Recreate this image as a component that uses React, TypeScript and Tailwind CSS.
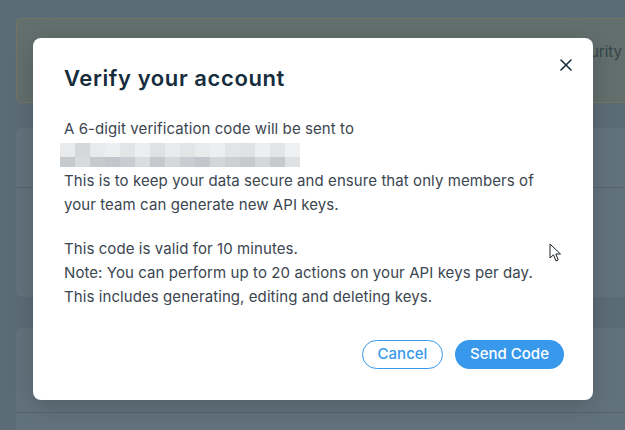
import React from 'react';

const topRow = [
  'bg-[#e9eaec]', 'bg-[#d5d8db]', 'bg-[#e9eaec]', 'bg-[#eceef0]', 'bg-[#e2e4e6]', 'bg-[#eceef0]', 'bg-[#dfe2e4]', 'bg-[#e9eaec]',
  'bg-[#e2e4e6]', 'bg-[#e9eaec]', 'bg-[#eceef0]', 'bg-[#e2e4e6]', 'bg-[#dfe2e4]', 'bg-[#eceef0]', 'bg-[#e2e4e6]', 'bg-[#eef0f1]',
];
const bottomRow = [
  'bg-[#c7cacd]', 'bg-[#d8dbde]', 'bg-[#c7cacd]', 'bg-[#c3c6ca]', 'bg-[#c9ccd0]', 'bg-[#dadcdf]', 'bg-[#c5c8cc]', 'bg-[#d5d7da]',
  'bg-[#c9ccd0]', 'bg-[#c3c6ca]', 'bg-[#d3d6d9]', 'bg-[#cdd0d3]', 'bg-[#c7cacd]', 'bg-[#d5d7da]', 'bg-[#c7cacd]', 'bg-[#dee0e2]',
];

function Redacted() {
  return (
    <div className="my-[2px] -ml-[4px] flex flex-col">
      <div className="flex h-[14px]">
        {topRow.map((c, i) => (
          <span key={i} className={`w-[15px] ${c}`} />
        ))}
      </div>
      <div className="flex h-[10px]">
        {bottomRow.map((c, i) => (
          <span key={i} className={`w-[15px] ${c}`} />
        ))}
      </div>
    </div>
  );
}

function Cursor() {
  return (
    <svg className="absolute left-[549px] top-[243px]" width="13" height="20" viewBox="0 0 13 20">
      <path
        d="M1 1 L1 15 L4.5 11.8 L7 18 L9.2 17 L6.8 11 L11.5 11 Z"
        fill="#ffffff"
        stroke="#1b2329"
        strokeWidth="1"
        strokeLinejoin="round"
      />
    </svg>
  );
}

export default function App() {
  return (
    <div
      className="relative h-[430px] w-[625px] overflow-hidden bg-[#5c6c77]"
      style={{ fontFamily: 'Inter, "Noto Sans", sans-serif' }}
    >
      {/* dimmed page behind the dialog */}
      <div className="flex flex-col pl-4 pt-[18px]">
        <div className="flex h-[85px] w-[640px] items-start justify-end rounded-md border border-[#737560] bg-[#626f6c] pr-[33px] pt-[22px] text-[15px] text-[#36454c]">
          Manage API keys with extra security
        </div>
        <div className="mt-[25px] flex h-[169px] w-[640px] flex-col rounded-md bg-[#62727c]">
          <div className="h-[60px] border-b border-[#56656f]" />
        </div>
        <div className="mt-[31px] flex h-[120px] w-[640px] flex-col rounded-md bg-[#62727c]">
          <div className="h-[85px] border-b border-[#56656f]" />
        </div>
      </div>

      {/* dialog */}
      <div className="absolute left-[33px] top-[38px] flex h-[362px] w-[560px] flex-col rounded-lg bg-white pl-[31px] pr-[29px] pt-[26px] shadow-[0_6px_24px_rgba(0,0,0,0.18)]">
        <button className="absolute right-[21px] top-[21px] flex h-[12px] w-[12px] items-center justify-center">
          <svg width="12" height="12" viewBox="0 0 12 12">
            <path d="M1 1 L11 11 M11 1 L1 11" stroke="#162d3d" strokeWidth="1.6" strokeLinecap="round" />
          </svg>
        </button>

        <h2 className="text-[22px] font-semibold leading-[28px] tracking-[0.6px] text-[#162d3d]">Verify your account</h2>

        <div className="mt-[25px] flex flex-col gap-5 text-[15px] leading-[24px] tracking-[0.08px] text-[#3b4650]">
          <div className="flex flex-col">
            <p>A 6-digit verification code will be sent to</p>
            <Redacted />
            <p>
              This is to keep your data secure and ensure that only members of
              <br />
              your team can generate new API keys.
            </p>
          </div>
          <p>
            This code is valid for 10 minutes.
            <br />
            Note: You can perform up to 20 actions on your API keys per day.
            <br />
            This includes generating, editing and deleting keys.
          </p>
        </div>

        <div className="mt-auto mb-[31px] flex justify-end gap-3">
          <button className="flex h-[29px] w-[81px] items-center justify-center rounded-full border border-[#3899ec] bg-white text-[15px] font-medium text-[#3899ec]">
            Cancel
          </button>
          <button className="flex h-[29px] w-[109px] items-center justify-center rounded-full bg-[#3899ec] text-[15px] font-medium text-white">
            Send Code
          </button>
        </div>
      </div>

      <Cursor />
    </div>
  );
}
